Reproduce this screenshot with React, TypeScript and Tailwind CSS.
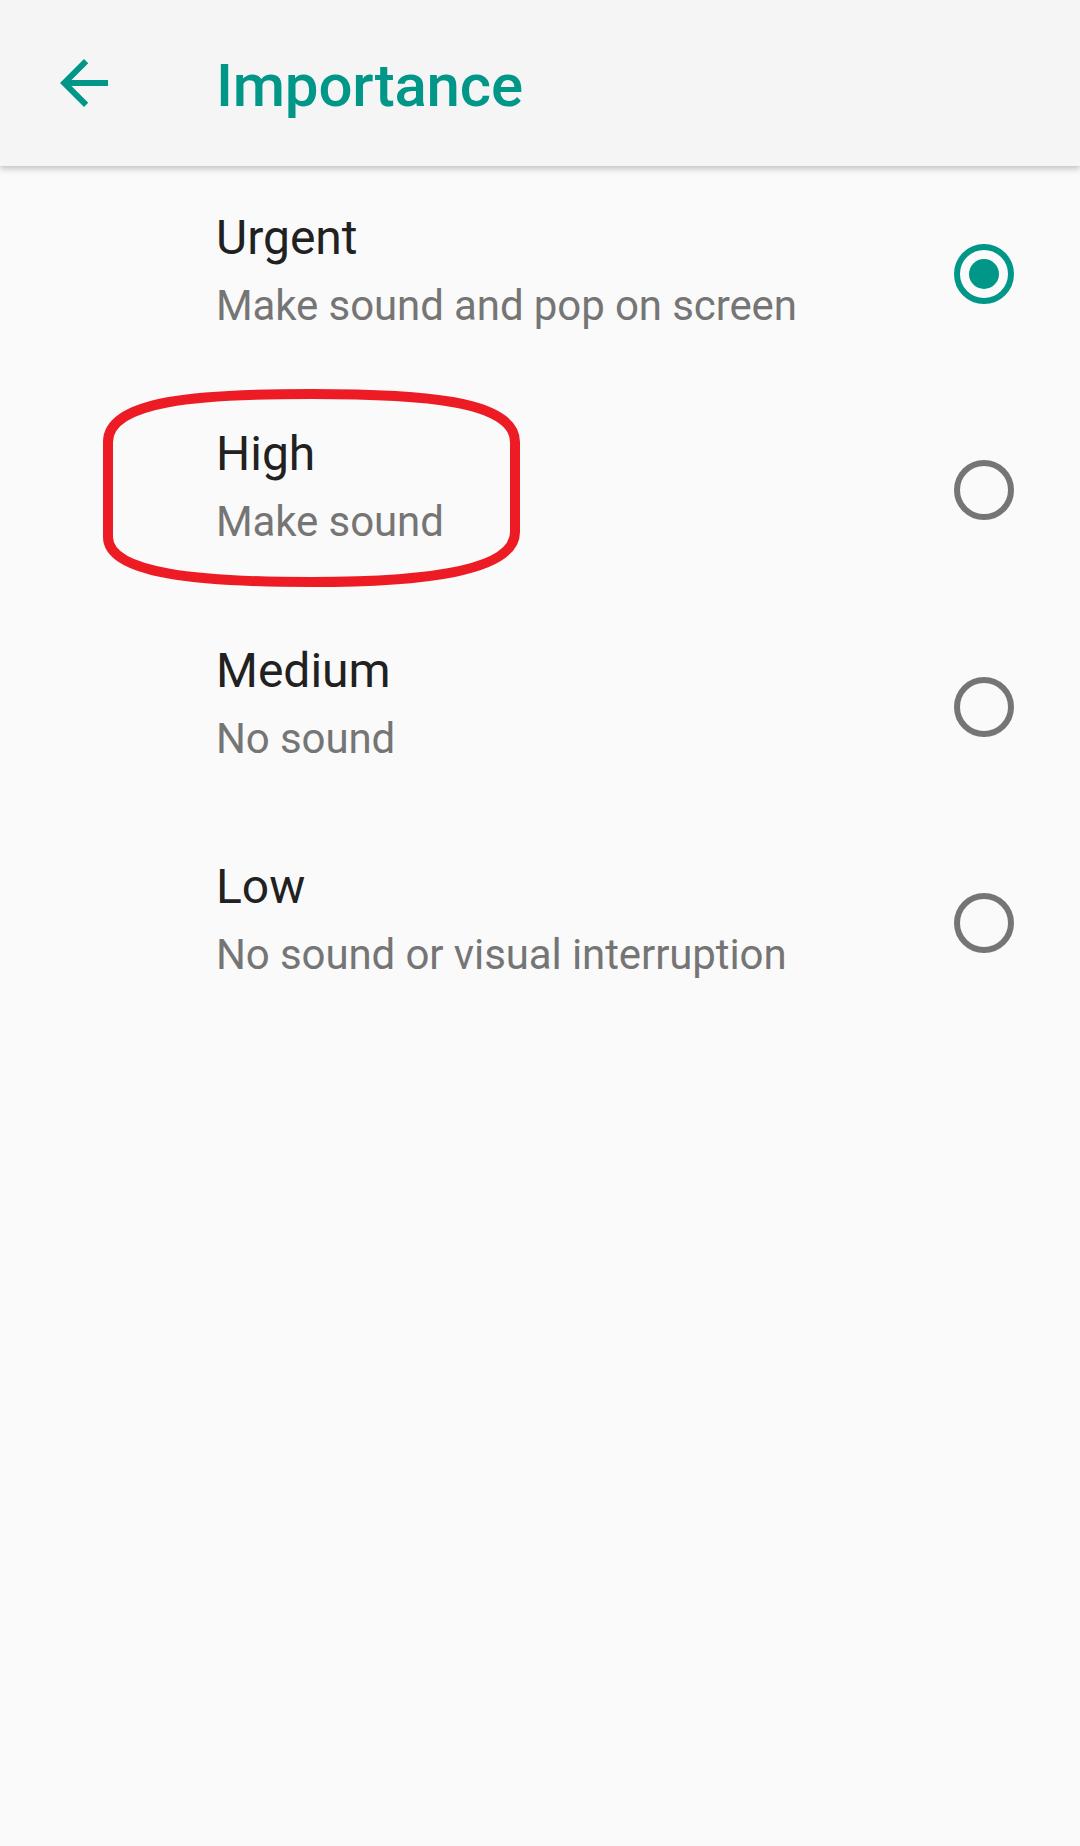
import React from "react";

type Item = { title: string; sub: string; checked?: boolean };

const items: Item[] = [
  { title: "Urgent", sub: "Make sound and pop on screen", checked: true },
  { title: "High", sub: "Make sound" },
  { title: "Medium", sub: "No sound" },
  { title: "Low", sub: "No sound or visual interruption" },
];

function Radio({ checked }: { checked?: boolean }) {
  const color = checked ? "#009688" : "#757575";
  return (
    <svg width="60" height="60" viewBox="0 0 60 60" className="shrink-0">
      <circle cx="30" cy="30" r="27" fill="none" stroke={color} strokeWidth="6" />
      {checked && <circle cx="30" cy="30" r="15" fill={color} />}
    </svg>
  );
}

export default function App() {
  return (
    <div
      className="relative w-[1080px] min-h-[1846px] bg-[#fafafa] overflow-hidden"
      style={{ fontFamily: "Roboto, 'Noto Sans', sans-serif" }}
    >
      <header className="relative z-10 h-[166px] bg-[#f5f5f5] shadow-[0_3px_6px_rgba(0,0,0,0.22)] flex items-start">
        <div className="ml-[48px] mt-[47px] w-[72px] h-[72px] shrink-0">
          <svg width="72" height="72" viewBox="0 0 24 24">
            <path
              d="M20 11H7.83l5.59-5.59L12 4l-8 8 8 8 1.41-1.41L7.83 13H20v-2z"
              fill="#009688"
            />
          </svg>
        </div>
        <h1 className="ml-[96px] pt-[56px] text-[60px] leading-[60px] font-medium text-[#009688] tracking-[-0.2px]">
          Importance
        </h1>
      </header>

      <div className="flex flex-col">
        {items.map((it) => (
          <div key={it.title} className="h-[216.33px] flex">
            <div className="flex-1 pl-[216px] pt-[40px]">
              <div className="text-[48px] leading-[64px] text-[#212121]">{it.title}</div>
              <div className="mt-[8px] text-[42px] leading-[56px] text-[#757575] tracking-[-0.1px]">{it.sub}</div>
            </div>
            <div className="self-center mr-[66px]">
              <Radio checked={it.checked} />
            </div>
          </div>
        ))}
      </div>

      <svg
        className="absolute left-0 top-0 pointer-events-none z-20"
        width="1080"
        height="620"
        viewBox="0 0 1080 620"
      >
        <path
          d="M 108 442 C 108 400, 200 394, 311 394 C 420 394, 515 400, 515 442 L 515 532 C 515 572, 420 582, 311 582 C 200 582, 108 574, 108 537 Z"
          fill="none"
          stroke="#ed1c24"
          strokeWidth="10"
          strokeLinejoin="round"
        />
      </svg>
    </div>
  );
}
